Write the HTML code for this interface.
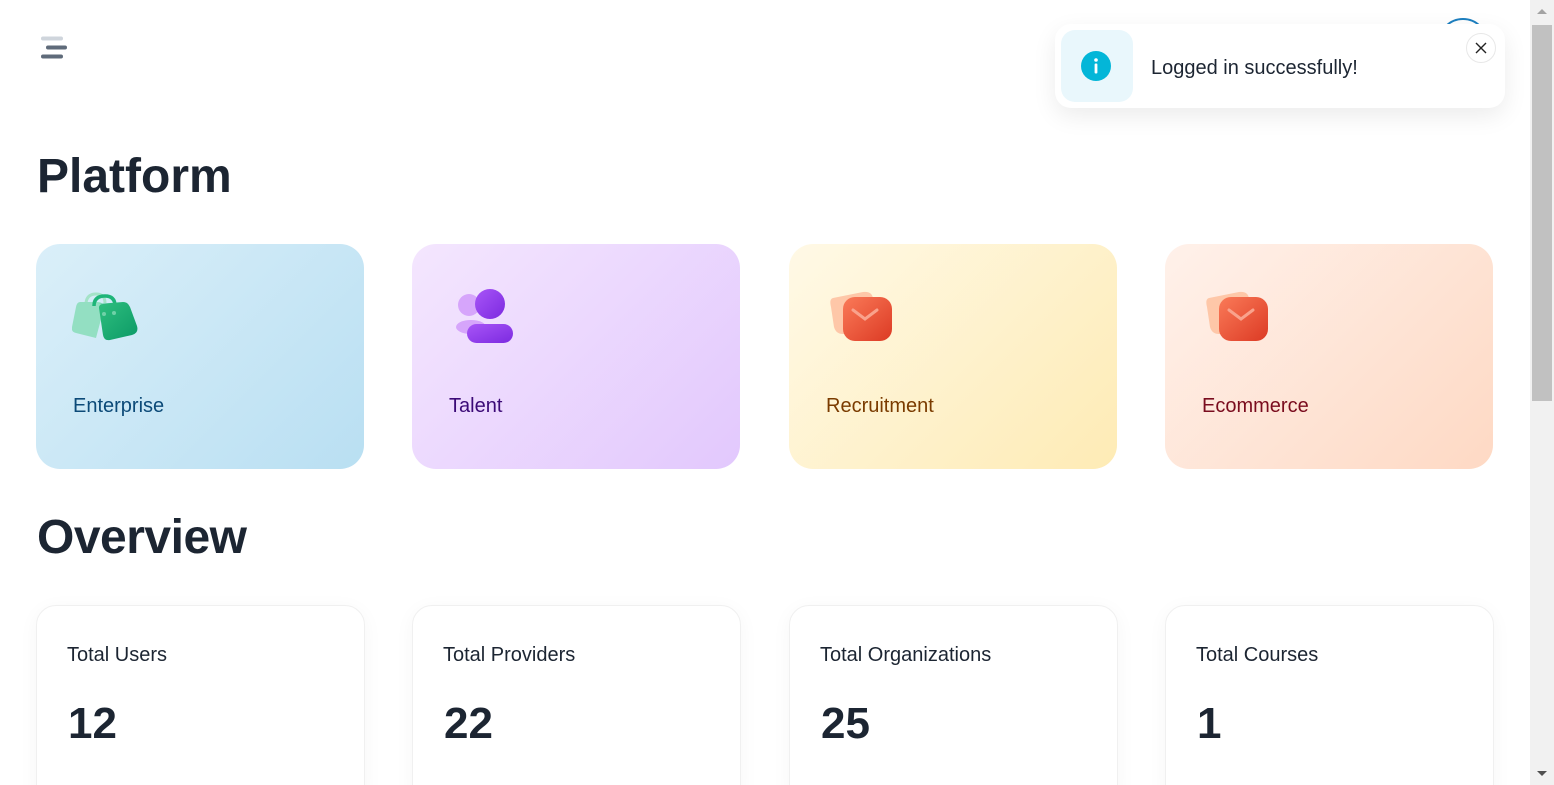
<!DOCTYPE html>
<html><head><meta charset="utf-8"><style>
*{box-sizing:border-box;margin:0;padding:0}
html,body{width:1554px;height:785px;overflow:hidden}
body{background:#fff;font-family:"Liberation Sans",sans-serif;color:#1c2532;position:relative}
.sb{position:absolute;right:0;top:0;width:24px;height:785px;background:#f1f1f1}
.sb .th{position:absolute;left:2px;right:2px;top:25px;height:376px;background:#c1c1c1}
.sb .up,.sb .dn{position:absolute;left:7px;width:0;height:0;border-left:5px solid transparent;border-right:5px solid transparent}
.sb .up{top:9px;border-bottom:5px solid #a3a3a3}
.sb .dn{bottom:9px;border-top:5px solid #505050}
h1{position:absolute;left:37px;font-size:48px;font-weight:bold;color:#1c2532}
.card{position:absolute;top:244px;width:328px;height:225px;border-radius:24px}
.card span{position:absolute;left:37px;top:151px;font-size:20px}
.card svg{position:absolute;left:36px;top:44px}
.ov{position:absolute;top:605px;width:329px;height:200px;border-radius:20px;border:1px solid #f0f0f0;box-shadow:0 4px 20px rgba(0,0,0,0.04);background:#fff}
.ov .l{position:absolute;left:30px;top:38px;font-size:20px;color:#1c2532}
.ov .n{position:absolute;left:31px;top:93px;font-size:44px;font-weight:bold;color:#1c2532}
.toast{position:absolute;left:1055px;top:24px;width:450px;height:84px;background:#fff;border-radius:16px;box-shadow:0 8px 24px rgba(0,0,0,0.08)}
</style></head><body>
<svg style="position:absolute;left:40px;top:36px" width="28" height="24"><g stroke-linecap="round" stroke-width="4"><line x1="3" y1="2.5" x2="21" y2="2.5" stroke="#cfd5dc"/><line x1="8" y1="11.5" x2="25" y2="11.5" stroke="#5f6b7a"/><line x1="3" y1="20.5" x2="21" y2="20.5" stroke="#5f6b7a"/></g></svg>
<div style="position:absolute;left:1438px;top:18px;width:50px;height:50px;border-radius:50%;border:2px solid #1d7fc0"></div>
<h1 style="top:149px">Platform</h1>
<h1 style="top:510px;letter-spacing:-0.5px">Overview</h1>

<div class="card" style="left:36px;background:linear-gradient(135deg,#daeff9,#b9dff2)">
<svg width="72" height="64" viewBox="0 0 72 64"><defs><linearGradient id="g1" x1="0" y1="0" x2="1" y2="1"><stop offset="0" stop-color="#2fbf7f"/><stop offset="1" stop-color="#0c9a66"/></linearGradient></defs>
<path d="M14 15 q1-9 10-9 q9 0 9 9" fill="none" stroke="#a4e3c8" stroke-width="3"/>
<path d="M8 14 q-3 0-4 5 l-4 20 q-1 5 4 6 l20 5 l8-30 q-1-6-6-6z" fill="#93dfc2"/>
<path d="M22 18 q0-10 11-10 q10 0 10 10" fill="none" stroke="#1eb579" stroke-width="3.5"/>
<path d="M26 16 l25-2 q5 0 7 5 l7 19 q2 7-5 9 l-22 5 q-6 1-7-5 l-4-27 q0-4 4-4z" fill="url(#g1)"/>
<circle cx="32" cy="26" r="2" fill="#6fd1a7"/><circle cx="42" cy="25" r="2" fill="#6fd1a7"/></svg>
<span style="color:#0c4a78">Enterprise</span></div>

<div class="card" style="left:412px;background:linear-gradient(135deg,#f4e6fe,#e2c8fd)">
<svg width="72" height="64" viewBox="0 0 72 64"><defs><linearGradient id="g2" x1="0" y1="0" x2="1" y2="1"><stop offset="0" stop-color="#a855f7"/><stop offset="1" stop-color="#7c2ae0"/></linearGradient></defs>
<circle cx="21" cy="17" r="11" fill="#d6a5fb"/><ellipse cx="23" cy="39" rx="15" ry="7" fill="#d6a5fb"/>
<circle cx="42" cy="16" r="15" fill="url(#g2)"/><rect x="19" y="36" width="46" height="19" rx="9.5" fill="url(#g2)"/></svg>
<span style="color:#3b0a77">Talent</span></div>

<div class="card" style="left:789px;background:linear-gradient(135deg,#fff9e6,#feebb5)">
<svg width="72" height="64" viewBox="0 0 72 64"><defs><linearGradient id="g3" x1="0" y1="0" x2="1" y2="1"><stop offset="0" stop-color="#fa7a58"/><stop offset="1" stop-color="#dc3a24"/></linearGradient></defs>
<path d="M8 10 l30-6 q10-1 10 8 v24 q0 10-10 10 h-20 q-7 0-9-7 l-3-20 q-2-8 2-9z" fill="#fec7a8"/>
<rect x="18" y="9" width="49" height="44" rx="12" fill="url(#g3)"/>
<path d="M28 22 l12 9 l12-9" fill="none" stroke="#f9a28c" stroke-width="3" stroke-linecap="round"/></svg>
<span style="color:#7a3b00">Recruitment</span></div>

<div class="card" style="left:1165px;background:linear-gradient(135deg,#fff1ea,#fed9c4)">
<svg width="72" height="64" viewBox="0 0 72 64"><defs><linearGradient id="g4" x1="0" y1="0" x2="1" y2="1"><stop offset="0" stop-color="#fa7a58"/><stop offset="1" stop-color="#dc3a24"/></linearGradient></defs>
<path d="M8 10 l30-6 q10-1 10 8 v24 q0 10-10 10 h-20 q-7 0-9-7 l-3-20 q-2-8 2-9z" fill="#fec7a8"/>
<rect x="18" y="9" width="49" height="44" rx="12" fill="url(#g4)"/>
<path d="M28 22 l12 9 l12-9" fill="none" stroke="#f9a28c" stroke-width="3" stroke-linecap="round"/></svg>
<span style="color:#7a0c1e">Ecommerce</span></div>

<div class="ov" style="left:36px"><div class="l">Total Users</div><div class="n">12</div></div>
<div class="ov" style="left:412px"><div class="l">Total Providers</div><div class="n">22</div></div>
<div class="ov" style="left:789px"><div class="l">Total Organizations</div><div class="n">25</div></div>
<div class="ov" style="left:1165px"><div class="l">Total Courses</div><div class="n">1</div></div>

<div class="toast">
<div style="position:absolute;left:6px;top:6px;width:72px;height:72px;border-radius:14px;background:#e9f7fc"></div>
<svg style="position:absolute;left:26px;top:27px" width="30" height="30"><circle cx="15" cy="15" r="15" fill="#03b6d8"/><circle cx="15" cy="9" r="1.8" fill="#fff"/><rect x="13.6" y="12.5" width="2.8" height="10" rx="1" fill="#fff"/></svg>
<div style="position:absolute;left:96px;top:33px;font-size:20px;color:#1c2532">Logged in successfully!</div>
<div style="position:absolute;left:411px;top:9px;width:30px;height:30px;border-radius:50%;border:1px solid #e8e8e8;background:#fff"><svg width="28" height="28"><path d="M9 9 L19 19 M19 9 L9 19" stroke="#222" stroke-width="1.4"/></svg></div>
</div>
<div class="sb"><div class="up"></div><div class="th"></div><div class="dn"></div></div>
</body></html>
